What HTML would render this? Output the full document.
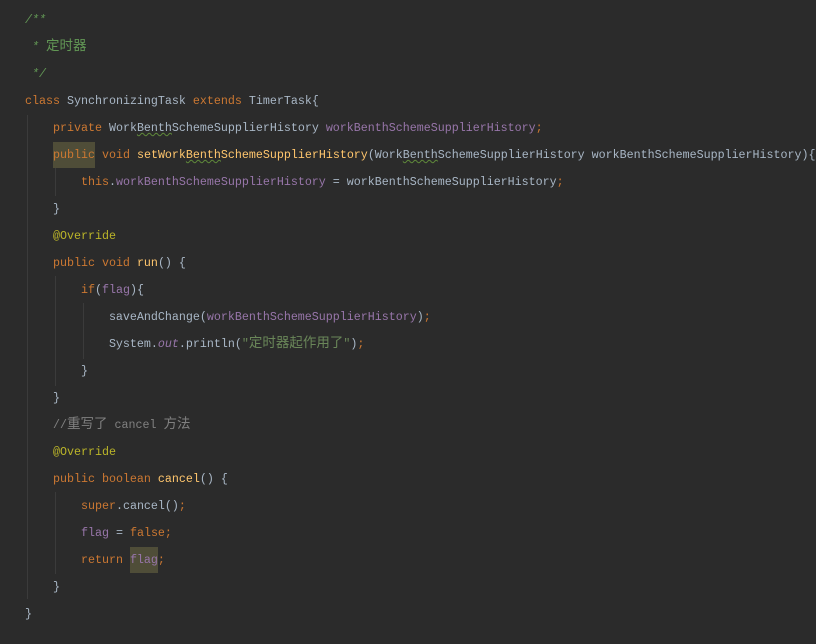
<!DOCTYPE html>
<html><head><meta charset="utf-8"><style>
body{margin:0;width:816px;height:644px;background:#2b2b2b;overflow:hidden;position:relative}
.c{position:absolute;left:25px;top:7px;font-family:"Liberation Mono","Noto Sans CJK SC",monospace;font-size:11.67px;line-height:27px;color:#a9b7c6;white-space:pre}
.k{color:#cc7832}.cm{color:#629755;font-style:italic}.f{color:#9876aa}.m{color:#ffc66d}.s{color:#6a8759}.a{color:#bbb529}.g{color:#808080}
.h{background:#4f4d38;padding:6px 0}.w{text-decoration:underline wavy #5f8a3a;text-decoration-thickness:1px}
.z{font-size:13.5px;font-style:normal}
.i{position:absolute;width:1px;background:#3b3b3b}
</style></head><body>
<div class="i" style="left:27px;top:115px;height:484px"></div>
<div class="i" style="left:55px;top:168px;height:28px"></div>
<div class="i" style="left:55px;top:276px;height:110px"></div>
<div class="i" style="left:83px;top:303px;height:56px"></div>
<div class="i" style="left:55px;top:492px;height:82px"></div>
<div class="c"><span class="cm">/**</span>
<span class="cm"> * <span class="z">定时器</span></span>
<span class="cm"> */</span>
<span class="k">class </span>SynchronizingTask <span class="k">extends </span>TimerTask{
    <span class="k">private </span>Work<span class="w">Benth</span>SchemeSupplierHistory <span class="f">workBenthSchemeSupplierHistory</span><span class="k">;</span>
    <span class="k h">public</span> <span class="k">void </span><span class="m">setWork<span class="w">Benth</span>SchemeSupplierHistory</span>(Work<span class="w">Benth</span>SchemeSupplierHistory workBenthSchemeSupplierHistory){
        <span class="k">this</span>.<span class="f">workBenthSchemeSupplierHistory</span> = workBenthSchemeSupplierHistory<span class="k">;</span>
    }
    <span class="a">@Override</span>
    <span class="k">public void </span><span class="m">run</span>() {
        <span class="k">if</span>(<span class="f">flag</span>){
            saveAndChange(<span class="f">workBenthSchemeSupplierHistory</span>)<span class="k">;</span>
            System.<span class="f" style="font-style:italic">out</span>.println(<span class="s">"<span class="z">定时器起作用了</span>"</span>)<span class="k">;</span>
        }
    }
    <span class="g">//<span class="z">重写了</span> cancel <span class="z">方法</span></span>
    <span class="a">@Override</span>
    <span class="k">public boolean </span><span class="m">cancel</span>() {
        <span class="k">super</span>.cancel()<span class="k">;</span>
        <span class="f">flag</span> = <span class="k">false;</span>
        <span class="k">return </span><span class="f h">flag</span><span class="k">;</span>
    }
}</div>
</body></html>
